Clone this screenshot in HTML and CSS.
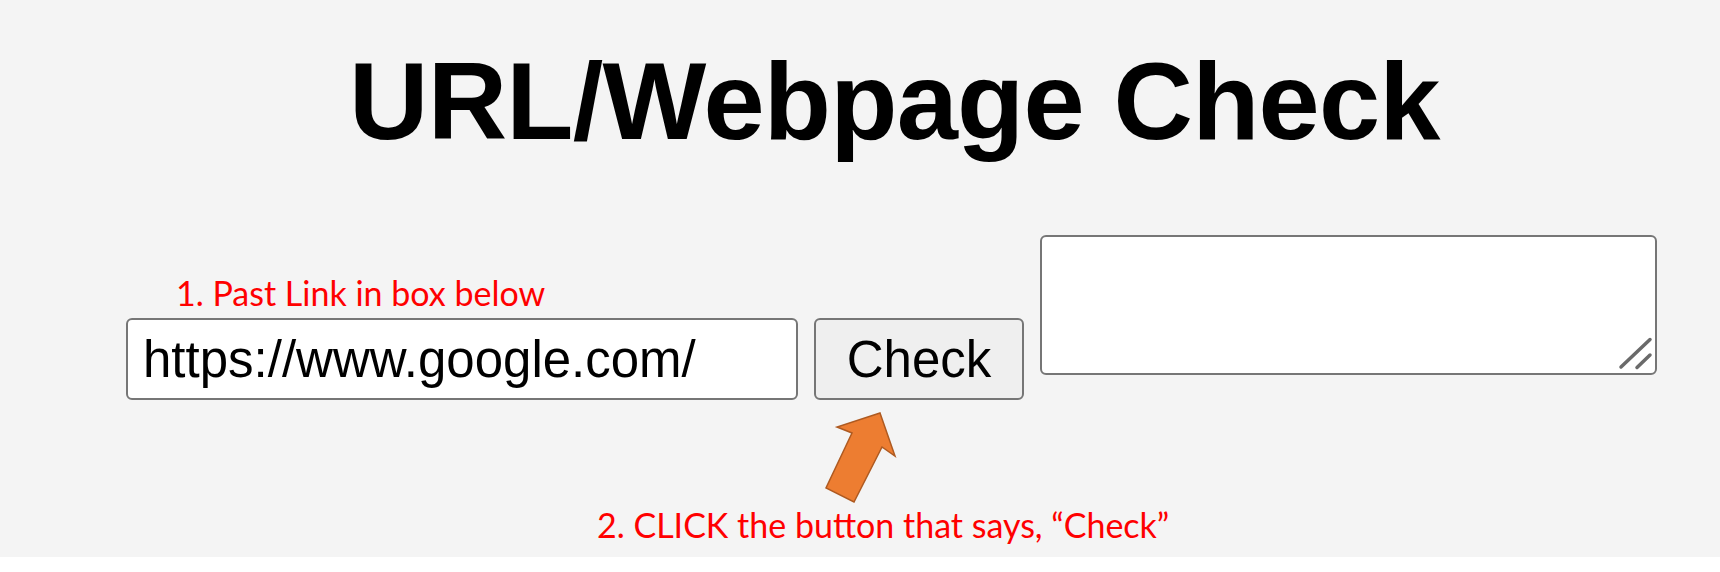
FILE: index.html
```html
<!DOCTYPE html>
<html lang="en">
<head>
<meta charset="utf-8">
<title>URL/Webpage Check</title>
<link rel="stylesheet" href="styles.css">
</head>
<body>
<main class="page">
  <h1 class="title">URL/Webpage Check</h1>
  <div class="row">
    <div class="url-group">
      <div class="note note-one">1. Past Link in box below</div>
      <input class="url-input" type="text" value="https://www.google.com/">
    </div>
    <button class="check-btn" type="button">Check</button>
    <div class="result-wrap">
      <textarea class="result"></textarea>
      <svg class="grip" width="40" height="40" viewBox="0 0 40 40" aria-hidden="true">
        <line x1="4" y1="32" x2="33" y2="4.5" />
        <line x1="20" y1="32.5" x2="33" y2="20" />
      </svg>
    </div>
  </div>
  <div class="note note-two">2. CLICK the button that says, “Check”</div>
  <svg class="arrow" width="82" height="100" viewBox="0 0 82 100" aria-hidden="true">
    <polygon points="60,5 75,48 62,39 34,94 6,80 32,25 17,19" />
  </svg>
</main>
</body>
</html>
```

FILE: styles.css
```css
html, body {
  margin: 0;
  padding: 0;
  background: #ffffff;
}

.page {
  position: relative;
  height: 557px;
  background: #f4f4f4;
  padding-top: 46px;
  box-sizing: border-box;
  font-family: "Liberation Sans", Arial, sans-serif;
}

.title {
  margin: 0 0 0 349px;
  font-size: 110px;
  line-height: 1;
  font-weight: bold;
  letter-spacing: -0.8px;
  color: #000;
  white-space: nowrap;
}

.row {
  display: flex;
  align-items: flex-end;
  gap: 16px;
  margin-top: 79px;
  margin-left: 126px;
  height: 165px;
}

.url-group {
  display: flex;
  flex-direction: column;
}

.note {
  font-family: Lato, "Noto Sans", sans-serif;
  font-size: 34px;
  line-height: 36px;
  color: #ff0000;
  white-space: nowrap;
}

.note-one {
  margin-left: 50px;
  margin-bottom: 7px;
}

.url-input {
  width: 672px;
  height: 82px;
  box-sizing: border-box;
  border: 2px solid #767676;
  border-radius: 6px;
  background: #ffffff;
  padding: 0 15px;
  margin: 0;
  font-family: "Liberation Sans", Arial, sans-serif;
  font-size: 51px;
  color: #000;
  outline: none;
}

.check-btn {
  width: 210px;
  height: 82px;
  box-sizing: border-box;
  border: 2px solid #767676;
  border-radius: 6px;
  background: #efefef;
  margin: 0;
  padding: 0;
  font-family: "Liberation Sans", Arial, sans-serif;
  font-size: 51px;
  color: #000;
}

.result-wrap {
  position: relative;
  width: 617px;
  height: 140px;
  margin-bottom: 25px;
}

.result {
  display: block;
  width: 617px;
  height: 140px;
  box-sizing: border-box;
  border: 2px solid #767676;
  border-radius: 6px;
  background: #ffffff;
  margin: 0;
  resize: none;
  outline: none;
}

.grip {
  position: absolute;
  right: 0;
  bottom: 0;
}

.grip line {
  stroke: #6a6a6a;
  stroke-width: 3.5;
  stroke-linecap: round;
}

.note-two {
  margin-top: 107px;
  margin-left: 597px;
}

.arrow {
  position: absolute;
  left: 820px;
  top: 408px;
}

.arrow polygon {
  fill: #ed7d31;
  stroke: #ae5a21;
  stroke-width: 1.5;
  stroke-linejoin: miter;
}
```
